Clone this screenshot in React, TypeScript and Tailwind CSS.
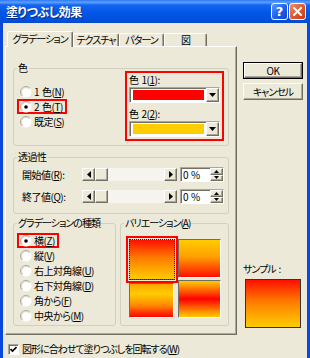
import React from "react";

const raised =
  "border border-t-white border-l-white border-r-[#716F64] border-b-[#716F64] shadow-[inset_-1px_-1px_0_#ACA899]";
const sunken =
  "border border-t-[#ACA899] border-l-[#ACA899] border-r-white border-b-white shadow-[inset_1px_1px_0_#716F64]";

function U({ children }: { children: React.ReactNode }) {
  return <span className="underline underline-offset-[1px]">{children}</span>;
}

function Sp() {
  return <span className="inline-block w-[3px]" />;
}

function Radio({ checked }: { checked?: boolean }) {
  return (
    <svg width="12" height="12" viewBox="0 0 12 12" className="shrink-0">
      <circle cx="6" cy="6" r="5.5" fill="#fff" />
      <path d="M2.1 9.9A5.5 5.5 0 0 1 9.9 2.1" stroke="#ACA899" fill="none" />
      <path d="M2.8 9.2A4.5 4.5 0 0 1 9.2 2.8" stroke="#D8D4C6" fill="none" />
      {checked && <circle cx="6" cy="6" r="1.8" fill="#000" />}
    </svg>
  );
}

function RadioRow({ checked, children, boxed }: { checked?: boolean; children: React.ReactNode; boxed?: boolean }) {
  if (boxed) {
    return (
      <div className="flex">
        <div className="-ml-[3px] flex h-[15px] items-center gap-[2px] border-2 border-[#FF0000] pl-[1px] pr-[2px]">
          <Radio checked={checked} />
          <span className="whitespace-nowrap">{children}</span>
        </div>
      </div>
    );
  }
  return (
    <div className="flex h-[15px] items-center gap-[2px]">
      <Radio checked={checked} />
      <span className="whitespace-nowrap">{children}</span>
    </div>
  );
}

function Fieldset({ legend, className, children }: { legend: React.ReactNode; className?: string; children: React.ReactNode }) {
  return (
    <fieldset className={"rounded-[3px] border border-[#D0D0BF] " + (className ?? "")}>
      <legend className="ml-[3px] h-[12px] px-[1px] leading-[12px] whitespace-nowrap">{legend}</legend>
      {children}
    </fieldset>
  );
}

function Dropdown({ color }: { color: string }) {
  return (
    <div className={"flex h-[16px] w-[91px] bg-white " + sunken}>
      <div className="flex flex-1 p-[2px] pl-[3px]">
        <div className="flex-1" style={{ backgroundColor: color }} />
      </div>
      <div className={"flex w-[13px] items-center justify-center bg-[#ECE9D8] " + raised}>
        <svg width="7" height="4" viewBox="0 0 7 4">
          <path d="M0 0h7L3.5 4z" fill="#000" />
        </svg>
      </div>
    </div>
  );
}

function ScrollBar() {
  return (
    <div className="flex h-[13px] w-[95px]">
      <div className={"flex w-[13px] items-center justify-center bg-[#ECE9D8] " + raised}>
        <svg width="4" height="7" viewBox="0 0 4 7">
          <path d="M4 0v7L0 3.5z" fill="#000" />
        </svg>
      </div>
      <div className={"w-[13px] bg-[#ECE9D8] " + raised} />
      <div className="flex-1 bg-[#F5F4EF]" />
      <div className={"flex w-[13px] items-center justify-center bg-[#ECE9D8] " + raised}>
        <svg width="4" height="7" viewBox="0 0 4 7">
          <path d="M0 0v7L4 3.5z" fill="#000" />
        </svg>
      </div>
    </div>
  );
}

function Spin() {
  return (
    <div className={"flex h-[15px] w-[44px] items-center bg-white " + sunken}>
      <span className="flex-1 pl-[2px] leading-[12px]">
        0<Sp />%
      </span>
      <div className="flex h-full w-[13px] flex-col">
        <div className={"flex flex-1 items-center justify-center bg-[#ECE9D8] " + raised}>
          <svg width="5" height="3" viewBox="0 0 5 3">
            <path d="M0 3h5L2.5 0z" fill="#000" />
          </svg>
        </div>
        <div className={"flex flex-1 items-center justify-center bg-[#ECE9D8] " + raised}>
          <svg width="5" height="3" viewBox="0 0 5 3">
            <path d="M0 0h5L2.5 3z" fill="#000" />
          </svg>
        </div>
      </div>
    </div>
  );
}

function Tab({ active, w, children }: { active?: boolean; w: string; children: React.ReactNode }) {
  if (active) {
    return (
      <div
        className={
          "relative z-10 -mb-[1px] flex h-[16px] items-center justify-center rounded-tl-[2px] rounded-tr-[2px] border-t border-l border-r border-t-white border-l-white border-r-[#716F64] bg-[#ECE9D8] pb-[1px] shadow-[inset_-1px_0_0_#ACA899] " +
          w
        }
      >
        <span className="leading-[12px] whitespace-nowrap tracking-[-1px]">{children}</span>
      </div>
    );
  }
  return (
    <div
      className={
        "flex h-[13px] items-center justify-center rounded-tl-[2px] rounded-tr-[2px] border-t border-l border-r border-t-white border-l-white border-r-[#716F64] bg-[#ECE9D8] shadow-[inset_-1px_0_0_#ACA899] " +
        w
      }
    >
      <span className="leading-[12px] whitespace-nowrap tracking-[-1px]">{children}</span>
    </div>
  );
}

function Tile({ className }: { className: string }) {
  return (
    <div className="h-full w-full border border-t-[#716F64] border-l-[#716F64] border-r-white border-b-white">
      <div className={"h-full w-full " + className} />
    </div>
  );
}

export default function App() {
  return (
    <div className="flex h-[358px] w-[310px] flex-col overflow-hidden bg-[#0A48DC] font-['Noto_Sans_CJK_JP','MS_UI_Gothic',sans-serif] text-[10px] leading-[12px] tracking-[-0.5px] text-black [font-feature-settings:'palt']">
      {/* Title bar */}
      <div className="flex h-[23px] shrink-0 items-center bg-[linear-gradient(to_bottom,#2D79F5_0%,#5AA0FF_10%,#1464F0_22%,#0055E5_60%,#0050DC_90%,#0A46C8_100%)] pl-[6px] pr-[4px]">
        <span className="flex-1 text-[12px] font-bold leading-[14px] tracking-[-0.5px] text-white [text-shadow:1px_1px_0_#0A2A80]">
          塗りつぶし効果
        </span>
        <div className="flex gap-[1px]">
          <div className="flex h-[17px] w-[17px] items-center justify-center rounded-[3px] border border-white bg-[linear-gradient(135deg,#5C9BFF_0%,#1F62EC_50%,#0C46D6_100%)] font-['DejaVu_Sans',sans-serif] text-[13px] font-bold leading-[13px] tracking-[0px] text-white">
            ?
          </div>
          <div className="flex h-[17px] w-[17px] items-center justify-center rounded-[3px] border border-white bg-[linear-gradient(135deg,#F0906A_0%,#E05A33_50%,#C43C18_100%)]">
            <svg width="9" height="9" viewBox="0 0 9 9">
              <path d="M1 1L8 8M8 1L1 8" stroke="#fff" strokeWidth="2" strokeLinecap="square" />
            </svg>
          </div>
        </div>
      </div>

      {/* Body */}
      <div className="mx-[3px] flex flex-1 bg-[#ECE9D8]">
        {/* left column */}
        <div className="ml-[2px] flex w-[232px] flex-col">
          <div className="mt-[8px] flex h-[15px] items-end pl-[2px]">
            <Tab active w="w-[66px]">グラデーション</Tab>
            <Tab w="w-[46px]">テクスチャ</Tab>
            <Tab w="w-[45px]">パターン</Tab>
            <Tab w="w-[43px]">図</Tab>
          </div>
          <div className="flex h-[289px] flex-col border border-t-white border-l-white border-r-[#716F64] border-b-[#716F64] px-[7px] pt-[15px] shadow-[inset_-1px_-1px_0_#ACA899]">
            {/* 色 */}
            <Fieldset legend="色" className="pb-[4px]">
              <div className="flex justify-between">
                <div className="flex flex-col pl-[6px] pt-[10px]">
                  <RadioRow>
                    1<Sp />色(<U>N</U>)
                  </RadioRow>
                  <RadioRow checked boxed>
                    2<Sp />色(<U>T</U>)
                  </RadioRow>
                  <RadioRow>
                    既定(<U>S</U>)
                  </RadioRow>
                </div>
                <div className="-mt-[3px] mr-[4px] flex h-[70px] w-[99px] flex-col border-2 border-[#FF0000] px-[2px] pt-[1px]">
                  <span className="h-[12px] whitespace-nowrap">
                    色<Sp />1(<U>1</U>):
                  </span>
                  <div className="mt-[1px]">
                    <Dropdown color="#FF0000" />
                  </div>
                  <span className="mt-[5px] h-[12px] whitespace-nowrap">
                    色<Sp />2(<U>2</U>):
                  </span>
                  <div className="mt-[1px]">
                    <Dropdown color="#FFCC00" />
                  </div>
                </div>
              </div>
            </Fieldset>

            {/* 透過性 */}
            <Fieldset legend="透過性" className="mt-[5px] pb-[9px]">
              <div className="flex flex-col gap-[7px] pl-[8px] pt-[4px]">
                <div className="flex h-[15px] items-center">
                  <span className="w-[60px] whitespace-nowrap">
                    開始値(<U>R</U>):
                  </span>
                  <ScrollBar />
                  <div className="ml-[3px]">
                    <Spin />
                  </div>
                </div>
                <div className="flex h-[15px] items-center">
                  <span className="w-[60px] whitespace-nowrap">
                    終了値(<U>Q</U>):
                  </span>
                  <ScrollBar />
                  <div className="ml-[3px]">
                    <Spin />
                  </div>
                </div>
              </div>
            </Fieldset>

            {/* gradient type + variation */}
            <div className="mt-[3px] flex gap-[4px]">
              <Fieldset
                legend={<span className="tracking-[-1px]">グラデーションの種類</span>}
                className="w-[103px] pb-[2px]"
              >
                <div className="flex flex-col pl-[6px] pt-[4px]">
                  <RadioRow checked boxed>
                    横(<U>Z</U>)
                  </RadioRow>
                  <RadioRow>
                    縦(<U>V</U>)
                  </RadioRow>
                  <RadioRow>
                    右上対角線(<U>U</U>)
                  </RadioRow>
                  <RadioRow>
                    右下対角線(<U>D</U>)
                  </RadioRow>
                  <RadioRow>
                    角から(<U>F</U>)
                  </RadioRow>
                  <RadioRow>
                    中央から(<U>M</U>)
                  </RadioRow>
                </div>
              </Fieldset>
              <Fieldset
                legend={
                  <span className="tracking-[-1px]">
                    バリエーション(<U>A</U>)
                  </span>
                }
                className="w-[109px]"
              >
                <div className="grid grid-cols-[52px_43px] grid-rows-[47px_36px] pl-[5px] pt-[7px]">
                  <div className="border-2 border-[#FF0000] p-[1px]">
                    <div className="h-full w-full border border-dotted border-[#222] bg-[linear-gradient(to_bottom,#FF1000_0%,#FF7A00_45%,#FFCC00_100%)]" />
                  </div>
                  <div className="pt-[3px] pb-[5px]">
                    <Tile className="bg-[linear-gradient(to_bottom,#FFCC00_0%,#FFA000_45%,#FF1000_100%)]" />
                  </div>
                  <div className="pl-[3px] pr-[4px] pb-[1px]">
                    <Tile className="bg-[linear-gradient(to_bottom,#FFA500_0%,#FFCC00_30%,#FF8800_65%,#FF0000_100%)]" />
                  </div>
                  <div className="-mt-[3px] pb-[1px]">
                    <Tile className="bg-[linear-gradient(to_bottom,#FFCC00_0%,#FF0000_50%,#FFCC00_100%)]" />
                  </div>
                </div>
              </Fieldset>
            </div>
          </div>
          {/* checkbox row */}
          <div className="mt-[8px] flex h-[12px] items-center gap-[3px] pl-[3px]">
            <div className={"flex h-[11px] w-[11px] items-center justify-center bg-white " + sunken}>
              <svg width="7" height="7" viewBox="0 0 7 7">
                <path d="M0.5 3L2.5 5L6.5 1" stroke="#000" strokeWidth="1.6" fill="none" />
              </svg>
            </div>
            <span className="whitespace-nowrap tracking-[-1px]">
              図形に合わせて塗りつぶしを回転する(<U>W</U>)
            </span>
          </div>
        </div>

        {/* right column */}
        <div className="ml-[6px] flex w-[60px] flex-col">
          <div className="mt-[39px] border border-black">
            <div className={"flex h-[15px] items-center justify-center bg-[#ECE9D8] " + raised}>OK</div>
          </div>
          <div className={"mt-[4px] flex h-[17px] items-center justify-center bg-[#ECE9D8] tracking-[-1px] " + raised}>
            キャンセル
          </div>
          <span className="mt-[163px] h-[12px] whitespace-nowrap tracking-[-1px]">
            サンプル<Sp />:
          </span>
          <div className="ml-[2px] mt-[4px] h-[49px] w-[56px] border border-[#333] bg-[linear-gradient(to_bottom,#FF1000_0%,#FF7A00_45%,#FFCC00_100%)]" />
        </div>
      </div>
    </div>
  );
}
